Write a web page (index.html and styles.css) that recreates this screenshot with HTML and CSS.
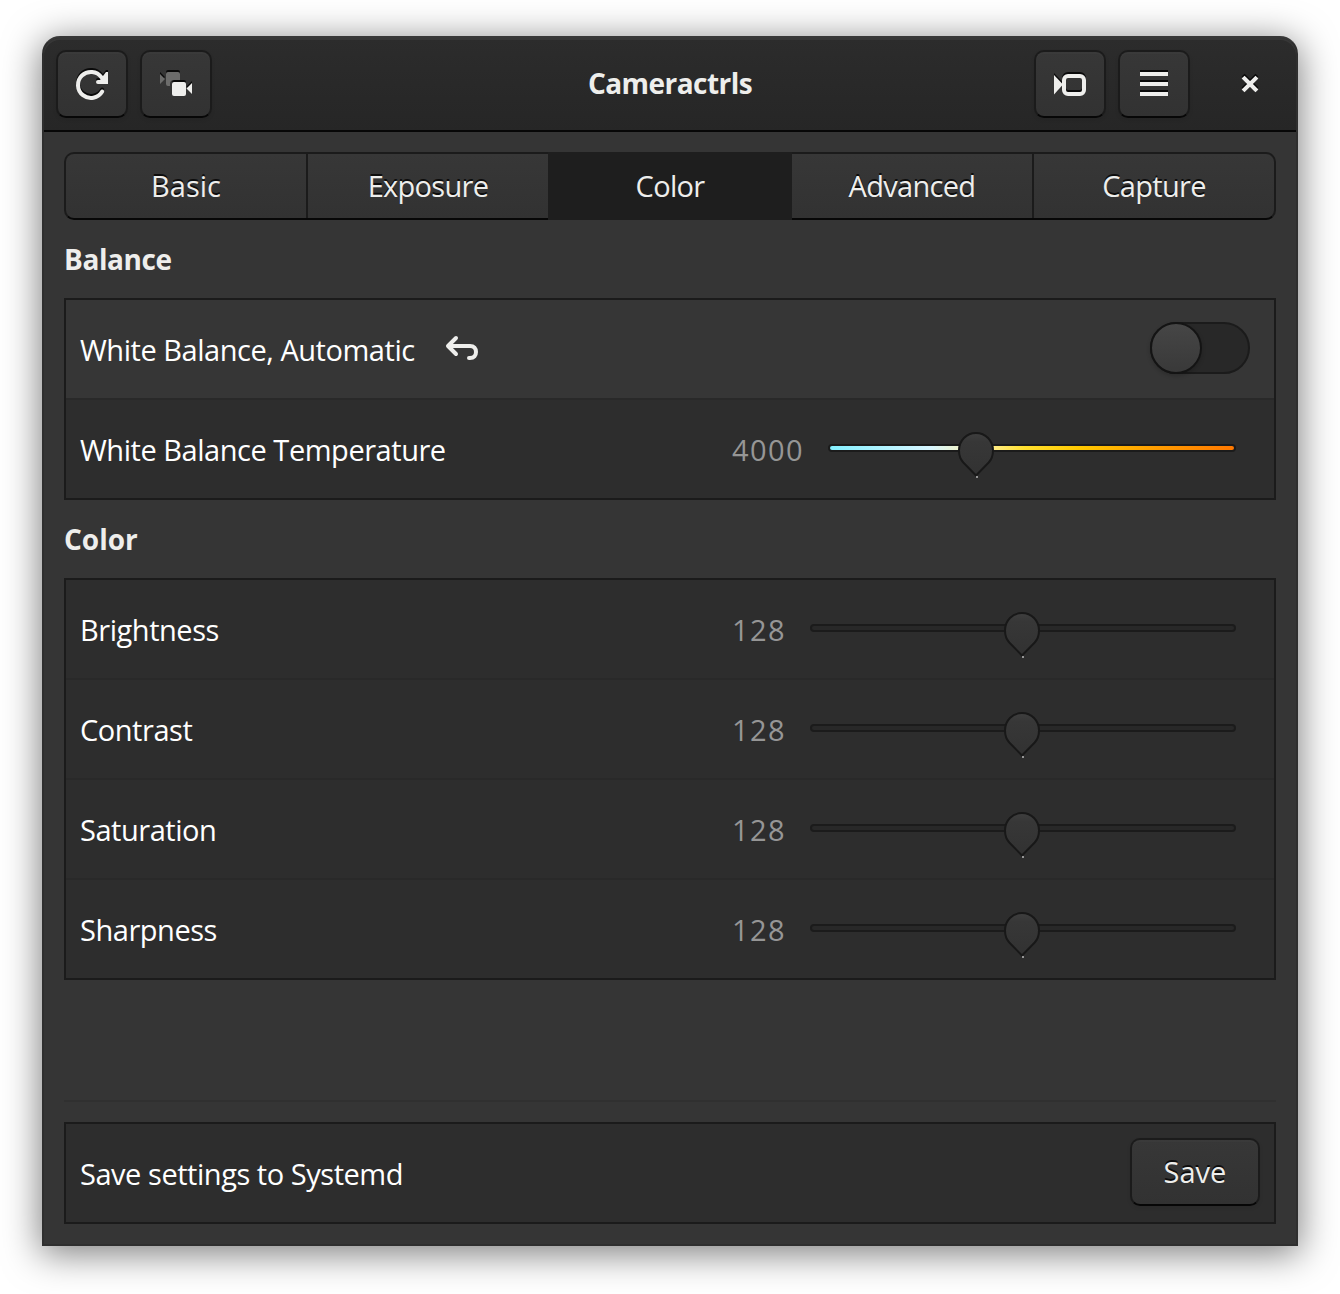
FILE: index.html
```html
<!DOCTYPE html>
<html lang="en">
<head>
<meta charset="utf-8">
<title>Cameractrls</title>
<link rel="stylesheet" href="styles.css">
</head>
<body>
<svg class="defs" width="0" height="0" aria-hidden="true">
  <defs>
    <linearGradient id="knob" x1="0" y1="0" x2="0" y2="1">
      <stop offset="0" stop-color="#3f3f3f"/>
      <stop offset="0.2" stop-color="#373737"/>
      <stop offset="1" stop-color="#323232"/>
    </linearGradient>
    <symbol id="pin" viewBox="0 0 36 48">
      <path d="M18 43.500 L5.300 30.500 C2.500 27.500 1 23.500 1 18.500 C1 8.500 8.500 1 18 1 C27.500 1 35 8.500 35 18.500 C35 23.500 33.500 27.500 30.700 30.500 Z" fill="url(#knob)" stroke="#181818" stroke-width="2"/>
      <path d="M18 44h2v2h-2z" fill="#969696"/>
    </symbol>
  </defs>
</svg>
<main class="window">
  <header class="titlebar">
    <div class="tools">
      <button class="button icon-button" aria-label="Refresh">
        <svg class="icon" width="36" height="36" viewBox="0 0 36 36">
          <path d="M28.200 25.500A13 13 0 1 1 27.500 11.300" fill="none" stroke="#eeeeec" stroke-width="4" stroke-linecap="round"/>
          <path d="M34 6v12H24a2 2 0 0 1 0-4h2L32 6z" fill="#eeeeec"/>
        </svg>
      </button>
      <button class="button icon-button" aria-label="Cameras">
        <svg class="icon" width="36" height="36" viewBox="0 0 36 36">
          <path d="M2 8l5 5-5 5zM10 6h10a2 2 0 0 1 2 2v6h-6a4 4 0 0 0-4 4v2h-2a2 2 0 0 1-2-2V8a2 2 0 0 1 2-2z" fill="#6c6c6b"/>
          <rect x="14" y="16" width="14" height="14" rx="2" fill="#eeeeec"/>
          <path d="M34 17v11l-5.500-5.500z" fill="#eeeeec"/>
        </svg>
      </button>
    </div>
    <h1 class="title">Cameractrls</h1>
    <div class="tools tools-end">
      <button class="button icon-button" aria-label="Open camera">
        <svg class="icon" width="36" height="36" viewBox="0 0 36 36">
          <path d="M2 9l9 9.500L2 28.500z" fill="#eeeeec"/>
          <rect x="12" y="10" width="20" height="18" rx="4" fill="none" stroke="#eeeeec" stroke-width="4"/>
        </svg>
      </button>
      <button class="button icon-button" aria-label="Menu">
        <svg class="icon" width="36" height="36" viewBox="0 0 36 36">
          <path d="M4 6h28v4H4zM4 16h28v4H4zM4 26h28v4H4z" fill="#eeeeec"/>
        </svg>
      </button>
      <button class="close" aria-label="Close">
        <svg class="icon" width="20" height="20" viewBox="0 0 20 20">
          <path d="M4.500 4.500l11 11M15.500 4.500L4.500 15.500" fill="none" stroke="#eeeeec" stroke-width="4" stroke-linecap="square"/>
        </svg>
      </button>
    </div>
  </header>
  <div class="content">
    <nav class="tabs">
      <button class="tab tab-basic">Basic</button>
      <button class="tab">Exposure</button>
      <button class="tab active">Color</button>
      <button class="tab">Advanced</button>
      <button class="tab">Capture</button>
    </nav>
    <h2 class="heading heading-balance">Balance</h2>
    <section class="list">
      <div class="row lit">
        <span class="label">White Balance, Automatic</span>
        <svg class="undo" width="36" height="28" viewBox="0 0 36 28">
          <path d="M12 4L4 12l8 8M5 12h21c4 0 6 2.500 6 6s-2 6-6 6h-1" fill="none" stroke="#eeeeec" stroke-width="4" stroke-linecap="round" stroke-linejoin="round"/>
        </svg>
        <span class="switch"><span class="switch-knob"></span></span>
      </div>
      <div class="row">
        <span class="label">White Balance Temperature</span>
        <span class="control"><span class="value">4000</span>
          <span class="trough warm"><svg class="pin pin-warm" width="36" height="48"><use href="#pin"/></svg></span></span>
      </div>
    </section>
    <h2 class="heading">Color</h2>
    <section class="list">
      <div class="row">
        <span class="label">Brightness</span>
        <span class="control"><span class="value">128</span>
          <span class="trough"><svg class="pin" width="36" height="48"><use href="#pin"/></svg></span></span>
      </div>
      <div class="row">
        <span class="label">Contrast</span>
        <span class="control"><span class="value">128</span>
          <span class="trough"><svg class="pin" width="36" height="48"><use href="#pin"/></svg></span></span>
      </div>
      <div class="row">
        <span class="label">Saturation</span>
        <span class="control"><span class="value">128</span>
          <span class="trough"><svg class="pin" width="36" height="48"><use href="#pin"/></svg></span></span>
      </div>
      <div class="row">
        <span class="label">Sharpness</span>
        <span class="control"><span class="value">128</span>
          <span class="trough"><svg class="pin" width="36" height="48"><use href="#pin"/></svg></span></span>
      </div>
    </section>
    <footer class="footer">
      <section class="list">
        <div class="row save-row">
          <span class="label">Save settings to Systemd</span>
          <button class="button save">Save</button>
        </div>
      </section>
    </footer>
  </div>
</main>
</body>
</html>
```
FILE: styles.css
```css
* { box-sizing: border-box; }

body {
  margin: 0;
  padding: 36px 42px 48px;
  background: #fff;
  color: #eeeeec;
  font: 400 29px/40px "Open Sans", "Noto Sans", sans-serif;
}

button {
  margin: 0;
  padding: 0;
  border: 0;
  background: none;
  color: inherit;
  font: inherit;
}

svg { display: block; }
.defs { position: absolute; }

.window {
  display: flex;
  flex-direction: column;
  height: 1210px;
  border: 2px solid #2f2f2f;
  border-top-color: #383838;
  border-radius: 18px 18px 0 0;
  background: #353535;
  box-shadow: 0 6px 36px 2px rgba(0, 0, 0, 0.5);
}

.titlebar {
  display: grid;
  grid-template-columns: 1fr auto 1fr;
  align-items: center;
  height: 94px;
  padding: 0 12px;
  border-bottom: 2px solid #070707;
  border-radius: 16px 16px 0 0;
  background: linear-gradient(#2c2c2c, #262626);
  box-shadow: inset 0 2px #373737;
}

.title {
  margin: 0;
  padding-bottom: 2px;
  font-size: 28px;
  font-weight: 700;
  line-height: 40px;
  letter-spacing: -0.55px;
}
.tools { display: flex; gap: 12px; }
.tools-end { justify-content: flex-end; }

.button {
  display: flex;
  align-items: center;
  justify-content: center;
  height: 68px;
  border: 2px solid #1b1b1b;
  border-bottom-color: #070707;
  border-radius: 10px;
  background: linear-gradient(#373737, #323232);
  box-shadow: inset 0 2px rgba(255, 255, 255, 0.02), 0 2px 4px rgba(0, 0, 0, 0.07);
  text-shadow: 0 -2px rgba(0, 0, 0, 0.75);
}

.icon-button { width: 72px; }
.icon { filter: drop-shadow(0 -2px rgba(0, 0, 0, 0.8)); }

.close {
  display: flex;
  align-items: center;
  justify-content: center;
  width: 68px;
  margin-left: 14px;
}

.content { display: flex; flex: 1; flex-direction: column; padding: 20px; }

.tabs {
  display: grid;
  grid-template-columns: repeat(4, 242px) 1fr;
  height: 68px;
  border: 2px solid #1b1b1b;
  border-bottom-color: #070707;
  border-radius: 10px;
  background: linear-gradient(#373737, #323232);
}

.tab {
  border-right: 2px solid #1b1b1b;
  letter-spacing: -0.7px;
  text-shadow: 0 -2px rgba(0, 0, 0, 0.75);
}
.tab-basic { letter-spacing: 0; }
.tab:last-child { border-right: 0; }
.tab.active { margin: -2px 0 -2px -2px; border-right: 0; background: #1e1e1e; text-shadow: none; }

.heading { margin: 19px 0; font-size: 28px; font-weight: 700; line-height: 40px; }
.heading-balance { letter-spacing: -0.4px; }
.list { border: 2px solid #1b1b1b; background: #2d2d2d; color: #fff; }
.row {
  display: flex;
  align-items: center;
  height: 100px;
  padding: 0 24px 2px 14px;
  border-bottom: 2px solid #292929;
}
.row:last-child { height: 98px; border-bottom: 0; }
.row.lit { padding-bottom: 2px; background: #363636; }
.label { padding-top: 3px; white-space: nowrap; letter-spacing: -0.46px; }
.undo { margin-left: 29px; }

.switch {
  width: 100px;
  height: 52px;
  margin-left: auto;
  border: 2px solid #1b1b1b;
  border-radius: 26px;
  background: #282828;
}
.switch-knob {
  display: block;
  width: 52px;
  height: 52px;
  margin: -2px;
  border: 2px solid #141414;
  border-radius: 50%;
  background: linear-gradient(#464646, #393939);
  box-shadow: 0 2px 4px rgba(0, 0, 0, 0.2);
}

.control {
  display: flex;
  align-items: center;
  width: 504px;
  height: 44px;
  margin-left: auto;
  margin-right: 14px;
}
.value { padding-top: 3px; color: #969696; letter-spacing: 1.4px; }
.trough {
  position: relative;
  width: 426px;
  height: 8px;
  margin-left: auto;
  border: 2px solid #1b1b1b;
  border-radius: 4px;
  background: #282828;
}
.warm {
  width: 408px;
  background: linear-gradient(90deg, #84f0ff, #d8f6ff 25%, #fff0a0 38%, #ffe030 48%, #ffc800 62%, #ff9c00 81%, #ff7800);
}
.pin { position: absolute; left: 192px; top: -14px; }
.pin-warm { left: 128px; }

.footer { margin-top: auto; padding-top: 20px; border-top: 2px solid #303030; }
.save-row { padding-right: 14px; }
.save { width: 130px; margin-left: auto; color: #eeeeec; }
```
